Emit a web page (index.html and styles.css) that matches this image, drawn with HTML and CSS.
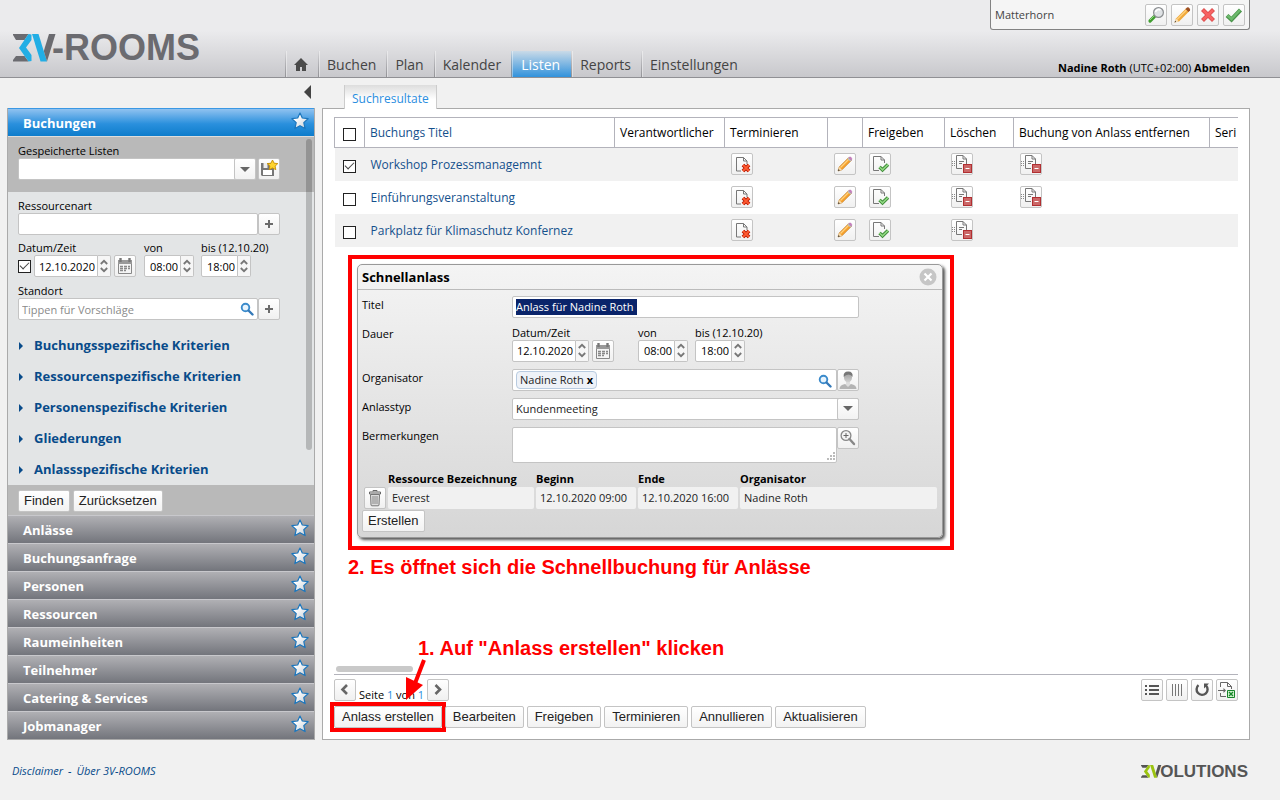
FILE: index.html
```html
<!DOCTYPE html>
<html lang="de">
<head>
<meta charset="utf-8">
<meta name="viewport" content="width=device-width, initial-scale=1">
<title>3V-ROOMS – Listen</title>
<link rel="stylesheet" href="styles.css">
</head>
<body>
<svg class="sprite" aria-hidden="true">
  <defs>
    <linearGradient id="g-star" x1="0" y1="0" x2="1" y2="1"><stop offset=".3" stop-color="#fff"/><stop offset="1" stop-color="#c4ccd4"/></linearGradient>
    <linearGradient id="g-person" x1="0" y1="0" x2="0" y2="1"><stop offset="0" stop-color="#999"/><stop offset="1" stop-color="#d4d4d4"/></linearGradient>
  </defs>
  <symbol id="i-star" viewBox="0 0 18 18"><path d="M9 1l2.300 5 5.800.7-4.300 3.900 1.300 6L9 13.700l-5.100 2.900 1.300-6L.9 6.700 6.700 6z" fill="url(#g-star)" stroke="#1b76bd" stroke-width="1.200" stroke-linejoin="round"/></symbol>
  <symbol id="i-home" viewBox="0 0 14 14"><path d="M7 0L0 7h2v6h4V9h2v4h4V7h2z" fill="#4a4a4a"/></symbol>
  <symbol id="i-search-green" viewBox="0 0 20 20"><path d="M8.500 11.500L4 16" stroke="#3f9d2f" stroke-width="3.200" stroke-linecap="round"/><path d="M8 11l-4 4" stroke="#8ed67c" stroke-width="1"/><circle cx="12.500" cy="7.500" r="4.900" fill="#dfe2e5" stroke="#8a8d90" stroke-width="1.200"/><path d="M9.500 7a3.200 3.200 0 0 1 5-2" stroke="#fff" stroke-width="1.600" fill="none"/></symbol>
  <symbol id="i-pencil-red" viewBox="0 0 20 20"><path d="M2.500 17.500l1.500-4 10-10 3 3-10 10z" fill="#f0a93c"/><path d="M5 14.500l9.500-9.500" stroke="#ffd07c" stroke-width="1.200"/><path d="M13.500 4l1.500-1.500q1.500-.5 2.500.7t.5 2.300l-1.500 1.500z" fill="#9c4f24"/><path d="M2.500 17.500l1.500-4 3 3z" fill="#f7dfb8"/><path d="M2.500 17.500l.7-1.700 1 1z" fill="#333"/></symbol>
  <symbol id="i-pencil" viewBox="0 0 20 20"><path d="M3 17l1.200-4L13.500 3.700l2.800 2.800L7 15.800z" fill="#f6a02c" stroke="#b8741c" stroke-width=".6"/><path d="M5.500 13.500L14 5" stroke="#ffd27d" stroke-width="1.200"/><path d="M12.500 4.700l1.300-1.200 2.700 2.700-1.200 1.300z" fill="#b8bcc0"/><path d="M13.800 3.500q1.400-1 2.400 0t.3 2.700z" fill="#cf7cc4" stroke="#a561a0" stroke-width=".5"/><path d="M3 17l1.200-4L7 15.800z" fill="#f7dcae"/><path d="M3 17l.6-1.900 1.300 1.300z" fill="#333"/></symbol>
  <symbol id="i-cross" viewBox="0 0 20 20"><path d="M4.500 4.500l11 11M15.500 4.500l-11 11" stroke="#d84848" stroke-width="4.200"/><path d="M5 5l10 10M15 5L5 15" stroke="#f76262" stroke-width="2.800"/></symbol>
  <symbol id="i-check" viewBox="0 0 20 20"><path d="M3 10.500l4.500 4 9-9.500" fill="none" stroke="#4a934a" stroke-width="4.200"/><path d="M3.500 10.500l4 3.500 8.500-9" fill="none" stroke="#6dba6d" stroke-width="2.400"/></symbol>
  <symbol id="i-doc-x" viewBox="0 0 20 20"><path d="M9 17H4.500V3.500h7l3.500 3.500V10M11.500 3.500V7H15" fill="none" stroke="#777"/><path d="M11 11l6 6M17 11l-6 6" stroke="#b51600" stroke-width="3.800"/><path d="M11 11l6 6M17 11l-6 6" stroke="#ff5a30" stroke-width="1.800"/></symbol>
  <symbol id="i-doc-check" viewBox="0 0 20 20"><path d="M9 16.500H3.500v-14h7.500l3.500 3.500v3M11 2.500V6h3.500" fill="none" stroke="#777"/><path d="M9.500 13l3 2.800 5.500-5.300" fill="none" stroke="#3c8b35" stroke-width="3.400"/><path d="M9.500 13l3 2.800 5.500-5.300" fill="none" stroke="#92d884" stroke-width="1.600"/></symbol>
  <symbol id="i-doc-minus" viewBox="0 0 20 20"><path d="M10 14.500H4.500v-13H11l3.500 3.500v5M11 1.500V5h3.500M7 7.500h5M7 9.500h3" fill="none" stroke="#777"/><path d="M0 7.500h3M0 9.500h3M0 11.500h3" stroke="#888" stroke-dasharray="1 1"/><rect x="11.500" y="10.500" width="8" height="8" fill="#cb6767" stroke="#b12f32"/><path d="M13.500 14.500h4" stroke="#fff"/></symbol>
  <symbol id="i-disk" viewBox="0 0 20 20"><path d="M2 4h10v5h3v8H3l-1-1z" fill="#777"/><path d="M4.500 4h4v5h-4z" fill="#eee"/><path d="M4 11h9v5H4z" fill="#fff"/><path d="M13.500 1l1.600 3.200 3.700.4-2.700 2.500.7 3.600-3.300-1.800-3.300 1.800.7-3.600-2.700-2.500 3.700-.4z" fill="#ffd42e" stroke="#c78d00" stroke-width=".9"/></symbol>
  <symbol id="i-plus" viewBox="0 0 20 20"><path d="M10 6v8M6 10h8" stroke="#6b6b6b" stroke-width="2"/></symbol>
  <symbol id="i-calendar" viewBox="0 0 20 20"><path d="M3.500 4.500h13v13h-13z" fill="#f4f4f4" stroke="#888"/><path d="M3 4h14v4H3z" fill="#999"/><path d="M5.500 2v4M14.500 2v4" stroke="#777" stroke-width="2.400"/><path d="M5 10.500h10M5 12.500h10M5 14.500h6" stroke="#888" stroke-width="1.400" stroke-dasharray="3 1"/></symbol>
  <symbol id="i-search-blue" viewBox="0 0 14 14"><circle cx="5.500" cy="5.500" r="3.800" fill="#e8f4fd" stroke="#3a8acb" stroke-width="1.900"/><path d="M8.500 8.500l4 4" stroke="#3479b8" stroke-width="2.400" stroke-linecap="round"/></symbol>
  <symbol id="i-person" viewBox="0 0 20 20"><path d="M1.500 19q0-4 5.500-5l3 2 3-2q5.500 1 5.500 5z" fill="#b4b4b4"/><path d="M8 11h4v4l-2 2-2-2z" fill="#ddd"/><ellipse cx="10" cy="7.500" rx="4" ry="5" fill="url(#g-person)"/><path d="M5.700 7q-.7-5.500 4.500-5.500T14.500 7q-1.200-2.500-4-2.500T5.700 7z" fill="#777"/></symbol>
  <symbol id="i-zoom" viewBox="0 0 20 20"><circle cx="8" cy="7.500" r="4.900" fill="#f4f4f4" stroke="#888" stroke-width="1.300"/><path d="M8 5v5M5.500 7.500h5" stroke="#666"/><path d="M11.500 11l4.500 5" stroke="#888" stroke-width="2.400" stroke-linecap="round"/></symbol>
  <symbol id="i-trash" viewBox="0 0 20 20"><path d="M8 3.500V2.500h4v1" fill="none" stroke="#666"/><path d="M4.500 4h11v2h-11z" fill="#eee" stroke="#666"/><path d="M5.500 6.500l.5 10.500q0 .8 1 .8h6q1 0 1-.8l.5-10.500z" fill="#ddd" stroke="#777"/><path d="M8 8v8M10 8v8M12 8v8" stroke="#888"/></symbol>
  <symbol id="i-close" viewBox="0 0 18 18"><circle cx="9" cy="9" r="8.500" fill="#c6c6c6"/><path d="M5.500 5.500l7 7M12.500 5.500l-7 7" stroke="#fff" stroke-width="2.200"/></symbol>
  <symbol id="i-prev" viewBox="0 0 20 20"><path d="M12 5l-4.500 4.500L12 14" fill="none" stroke="#666" stroke-width="2.600"/></symbol>
  <symbol id="i-next" viewBox="0 0 20 20"><path d="M7.500 5L12 9.500 7.500 14" fill="none" stroke="#666" stroke-width="2.600"/></symbol>
  <symbol id="i-list" viewBox="0 0 20 20"><path d="M7 6h10M7 10h10M7 14h10M3 6h2M3 10h2M3 14h2" stroke="#555" stroke-width="2"/></symbol>
  <symbol id="i-columns" viewBox="0 0 20 20"><path d="M5.500 4v12M8.500 4v12M11.500 4v12M14.500 4v12" stroke="#777"/></symbol>
  <symbol id="i-reload" viewBox="0 0 20 20"><path d="M6.500 5.200a5.500 5.500 0 1 0 7.500.3" fill="none" stroke="#555" stroke-width="2.400"/><path d="M12 3.500h5l-5 5z" fill="#555"/></symbol>
  <symbol id="i-export" viewBox="0 0 20 20"><path d="M3.500 7V2.500h7l4 4V9M10.500 2.500v4h4M3.500 13v3.500H9" fill="none" stroke="#666"/><path d="M1 10.500h7" stroke="#666"/><path d="M6.500 8l2.500 2.500L6.500 13z" fill="#666"/><path d="M10.500 10.500h7v7h-7z" fill="#d4f3d0" stroke="#17852b"/><path d="M12 12l4 4M16 12l-4 4" stroke="#17852b" stroke-width="1.300"/></symbol>
  <symbol id="i-up" viewBox="0 0 8 6"><path d="M.8 5L4 1.800 7.200 5" fill="none" stroke="#777" stroke-width="1.800"/></symbol>
  <symbol id="i-down" viewBox="0 0 8 6"><path d="M.8 1L4 4.200 7.200 1" fill="none" stroke="#777" stroke-width="1.800"/></symbol>
  <symbol id="i-mark" viewBox="0 0 44 28" preserveAspectRatio="none"><path class="mark-base" d="M0 0h15.500l-4 6H3L0 1zM3 22h8.500l4 5.500H0V26z"/><path class="mark-accent" d="M15.500 0l3 .5V6l-5.500 7.500L18.500 21v6l-3 .5L6 14z"/><path class="mark-accent" d="M19 0h6.500L34 27.500h-6.500z"/><path class="mark-base" d="M36 0h6.500L34 27.500 30.800 17z"/></symbol>
</svg>

<header class="header">
  <h1 class="logo" aria-label="3V-ROOMS"><svg class="logo-mark" aria-hidden="true"><use href="#i-mark"/></svg>-ROOMS</h1>
  <nav class="nav" aria-label="Hauptnavigation">
    <a href="#" aria-label="Startseite"><svg class="ic-home"><use href="#i-home"/></svg></a>
    <a href="#">Buchen</a>
    <a href="#">Plan</a>
    <a href="#">Kalender</a>
    <a href="#" class="active" aria-current="page">Listen</a>
    <a href="#">Reports</a>
    <a href="#">Einstellungen</a>
  </nav>
  <div class="header-right">
    <div class="quick">
      <span class="quick-name">Matterhorn</span>
      <button class="icon-btn" aria-label="Suchen"><svg><use href="#i-search-green"/></svg></button>
      <button class="icon-btn" aria-label="Bearbeiten"><svg><use href="#i-pencil-red"/></svg></button>
      <button class="icon-btn" aria-label="Verwerfen"><svg><use href="#i-cross"/></svg></button>
      <button class="icon-btn" aria-label="Bestätigen"><svg><use href="#i-check"/></svg></button>
    </div>
    <div class="user"><b>Nadine Roth</b> (UTC+02:00) <a href="#">Abmelden</a></div>
  </div>
</header>

<main class="main">
  <aside class="side">
    <div class="side-top"><button class="collapse" aria-label="Seitenleiste einklappen"></button></div>
    <div class="side-box">
      <h2 class="acc acc-active"><a href="#">Buchungen</a><svg class="ic-star"><use href="#i-star"/></svg></h2>
      <div class="side-scroll">
        <div class="saved">
          <label for="saved">Gespeicherte Listen</label>
          <div class="row">
            <span class="select saved-select"><select id="saved" class="field"><option></option></select><span class="drop"></span></span>
            <button class="icon-btn save-btn" aria-label="Liste speichern"><svg><use href="#i-disk"/></svg></button>
          </div>
        </div>
        <div class="criteria">
          <div>
            <label for="art">Ressourcenart</label>
            <div class="row side-field"><input id="art" class="field" type="text"><button class="icon-btn" aria-label="Ressourcenart hinzufügen"><svg><use href="#i-plus"/></svg></button></div>
          </div>
          <div class="times">
            <div>
              <label for="s-date">Datum/Zeit</label>
              <div class="row">
                <input class="check" type="checkbox" checked aria-label="Datum verwenden">
                <span class="spin date"><input id="s-date" class="field" type="text" value="12.10.2020"><span class="steps"><button aria-label="Später"><svg><use href="#i-up"/></svg></button><button aria-label="Früher"><svg><use href="#i-down"/></svg></button></span></span>
                <button class="icon-btn cal" aria-label="Kalender"><svg><use href="#i-calendar"/></svg></button>
              </div>
            </div>
            <div>
              <label for="s-from">von</label>
              <span class="spin"><input id="s-from" class="field" type="text" value="08:00"><span class="steps"><button aria-label="Später"><svg><use href="#i-up"/></svg></button><button aria-label="Früher"><svg><use href="#i-down"/></svg></button></span></span>
            </div>
            <div>
              <label for="s-to">bis (12.10.20)</label>
              <span class="spin"><input id="s-to" class="field" type="text" value="18:00"><span class="steps"><button aria-label="Später"><svg><use href="#i-up"/></svg></button><button aria-label="Früher"><svg><use href="#i-down"/></svg></button></span></span>
            </div>
          </div>
          <div>
            <label for="ort">Standort</label>
            <div class="row side-field"><span class="search"><input id="ort" class="field" type="text" placeholder="Tippen für Vorschläge"><svg><use href="#i-search-blue"/></svg></span><button class="icon-btn" aria-label="Standort hinzufügen"><svg><use href="#i-plus"/></svg></button></div>
          </div>
        </div>
        <ul class="groups">
          <li><a href="#">Buchungsspezifische Kriterien</a></li>
          <li><a href="#">Ressourcenspezifische Kriterien</a></li>
          <li><a href="#">Personenspezifische Kriterien</a></li>
          <li><a href="#">Gliederungen</a></li>
          <li><a href="#">Anlassspezifische Kriterien</a></li>
        </ul>
        <span class="thumb-v"></span>
      </div>
      <div class="side-actions"><button class="btn">Finden</button><button class="btn">Zurücksetzen</button></div>
      <h2 class="acc"><a href="#">Anlässe</a><svg class="ic-star"><use href="#i-star"/></svg></h2>
      <h2 class="acc"><a href="#">Buchungsanfrage</a><svg class="ic-star"><use href="#i-star"/></svg></h2>
      <h2 class="acc"><a href="#">Personen</a><svg class="ic-star"><use href="#i-star"/></svg></h2>
      <h2 class="acc"><a href="#">Ressourcen</a><svg class="ic-star"><use href="#i-star"/></svg></h2>
      <h2 class="acc"><a href="#">Raumeinheiten</a><svg class="ic-star"><use href="#i-star"/></svg></h2>
      <h2 class="acc"><a href="#">Teilnehmer</a><svg class="ic-star"><use href="#i-star"/></svg></h2>
      <h2 class="acc"><a href="#">Catering &amp; Services</a><svg class="ic-star"><use href="#i-star"/></svg></h2>
      <h2 class="acc"><a href="#">Jobmanager</a><svg class="ic-star"><use href="#i-star"/></svg></h2>
    </div>
  </aside>

  <section class="content">
    <div class="tabs"><a href="#" class="tab">Suchresultate</a></div>
    <div class="panel">
      <div class="table-wrap">
        <table class="results">
          <colgroup><col class="c-check"><col class="c-title"><col class="c-owner"><col class="c-term"><col class="c-edit"><col class="c-free"><col class="c-del"><col class="c-remove"><col></colgroup>
          <thead>
            <tr><th><input class="check" type="checkbox" aria-label="Alle auswählen"></th><th><a href="#">Buchungs Titel</a></th><th>Verantwortlicher</th><th>Terminieren</th><th></th><th>Freigeben</th><th>Löschen</th><th>Buchung von Anlass entfernen</th><th>Seri</th></tr>
          </thead>
          <tbody>
            <tr>
              <td><input class="check" type="checkbox" checked aria-label="Workshop Prozessmanagemnt auswählen"></td><td><a href="#">Workshop Prozessmanagemnt</a></td><td></td>
              <td><button class="icon-btn" aria-label="Terminieren"><svg><use href="#i-doc-x"/></svg></button></td>
              <td><button class="icon-btn" aria-label="Bearbeiten"><svg><use href="#i-pencil"/></svg></button></td>
              <td><button class="icon-btn" aria-label="Freigeben"><svg><use href="#i-doc-check"/></svg></button></td>
              <td><button class="icon-btn" aria-label="Löschen"><svg><use href="#i-doc-minus"/></svg></button></td>
              <td><button class="icon-btn" aria-label="Von Anlass entfernen"><svg><use href="#i-doc-minus"/></svg></button></td><td></td>
            </tr>
            <tr>
              <td><input class="check" type="checkbox" aria-label="Einführungsveranstaltung auswählen"></td><td><a href="#">Einführungsveranstaltung</a></td><td></td>
              <td><button class="icon-btn" aria-label="Terminieren"><svg><use href="#i-doc-x"/></svg></button></td>
              <td><button class="icon-btn" aria-label="Bearbeiten"><svg><use href="#i-pencil"/></svg></button></td>
              <td><button class="icon-btn" aria-label="Freigeben"><svg><use href="#i-doc-check"/></svg></button></td>
              <td><button class="icon-btn" aria-label="Löschen"><svg><use href="#i-doc-minus"/></svg></button></td>
              <td><button class="icon-btn" aria-label="Von Anlass entfernen"><svg><use href="#i-doc-minus"/></svg></button></td><td></td>
            </tr>
            <tr>
              <td><input class="check" type="checkbox" aria-label="Parkplatz für Klimaschutz Konfernez auswählen"></td><td><a href="#">Parkplatz für Klimaschutz Konfernez</a></td><td></td>
              <td><button class="icon-btn" aria-label="Terminieren"><svg><use href="#i-doc-x"/></svg></button></td>
              <td><button class="icon-btn" aria-label="Bearbeiten"><svg><use href="#i-pencil"/></svg></button></td>
              <td><button class="icon-btn" aria-label="Freigeben"><svg><use href="#i-doc-check"/></svg></button></td>
              <td><button class="icon-btn" aria-label="Löschen"><svg><use href="#i-doc-minus"/></svg></button></td>
              <td></td><td></td>
            </tr>
          </tbody>
        </table>
      </div>

      <div class="callout">
        <form class="dialog" aria-label="Schnellanlass">
          <div class="dialog-head"><h2>Schnellanlass</h2><button type="button" class="close" aria-label="Schliessen"><svg><use href="#i-close"/></svg></button></div>
          <div class="form">
            <label for="titel">Titel</label>
            <div class="title-field field"><input id="titel" type="text" value="Anlass für Nadine Roth"></div>
            <span>Dauer</span>
            <div class="times">
              <div>
                <label for="d-date">Datum/Zeit</label>
                <div class="row">
                  <span class="spin date"><input id="d-date" class="field" type="text" value="12.10.2020"><span class="steps"><button type="button" aria-label="Später"><svg><use href="#i-up"/></svg></button><button type="button" aria-label="Früher"><svg><use href="#i-down"/></svg></button></span></span>
                  <button type="button" class="icon-btn cal" aria-label="Kalender"><svg><use href="#i-calendar"/></svg></button>
                </div>
              </div>
              <div class="from">
                <label for="d-from">von</label>
                <span class="spin"><input id="d-from" class="field" type="text" value="08:00"><span class="steps"><button type="button" aria-label="Später"><svg><use href="#i-up"/></svg></button><button type="button" aria-label="Früher"><svg><use href="#i-down"/></svg></button></span></span>
              </div>
              <div>
                <label for="d-to">bis (12.10.20)</label>
                <span class="spin"><input id="d-to" class="field" type="text" value="18:00"><span class="steps"><button type="button" aria-label="Später"><svg><use href="#i-up"/></svg></button><button type="button" aria-label="Früher"><svg><use href="#i-down"/></svg></button></span></span>
              </div>
            </div>
            <label for="org">Organisator</label>
            <div class="row"><span class="search field tags"><span class="tag">Nadine Roth<button type="button" aria-label="Nadine Roth entfernen">x</button></span><input id="org" type="text"><svg><use href="#i-search-blue"/></svg></span><button type="button" class="icon-btn" aria-label="Person wählen"><svg><use href="#i-person"/></svg></button></div>
            <label for="typ">Anlasstyp</label>
            <span class="select"><select id="typ" class="field"><option>Kundenmeeting</option></select><span class="drop"></span></span>
            <label for="bem">Bermerkungen</label>
            <div class="row note-row"><span class="note"><textarea id="bem" class="field"></textarea><svg class="grip" viewBox="0 0 8 8"><path d="M6 1h2M3 4h2M6 4h2M0 7h2M3 7h2M6 7h2" stroke="#bbb" stroke-width="2"/></svg></span><button type="button" class="icon-btn" aria-label="Vergrössern"><svg><use href="#i-zoom"/></svg></button></div>
          </div>
          <table class="res">
            <thead><tr><th></th><th class="r-name">Ressource Bezeichnung</th><th class="r-time">Beginn</th><th class="r-time">Ende</th><th>Organisator</th></tr></thead>
            <tbody><tr><td class="r-icon"><button type="button" class="icon-btn" aria-label="Ressource löschen"><svg><use href="#i-trash"/></svg></button></td><td>Everest</td><td>12.10.2020 09:00</td><td>12.10.2020 16:00</td><td>Nadine Roth</td></tr></tbody>
          </table>
          <button type="button" class="btn">Erstellen</button>
        </form>
      </div>
      <p class="hint">2. Es öffnet sich die Schnellbuchung für Anlässe</p>

      <div class="bottom">
        <p class="hint hint-one">1. Auf "Anlass erstellen" klicken</p>
        <div class="thumb-h"></div>
        <div class="pager">
          <button class="icon-btn" aria-label="Vorherige Seite"><svg><use href="#i-prev"/></svg></button>
          <span class="pages">Seite <a href="#">1</a> von <a href="#">1</a></span>
          <button class="icon-btn" aria-label="Nächste Seite"><svg><use href="#i-next"/></svg></button>
          <div class="tools">
            <button class="icon-btn" aria-label="Liste"><svg><use href="#i-list"/></svg></button>
            <button class="icon-btn" aria-label="Spalten"><svg><use href="#i-columns"/></svg></button>
            <button class="icon-btn" aria-label="Neu laden"><svg><use href="#i-reload"/></svg></button>
            <button class="icon-btn" aria-label="Exportieren"><svg><use href="#i-export"/></svg></button>
          </div>
        </div>
        <div class="actions">
          <span class="marked"><button class="btn">Anlass erstellen</button></span>
          <button class="btn">Bearbeiten</button><button class="btn">Freigeben</button><button class="btn">Terminieren</button><button class="btn">Annullieren</button><button class="btn">Aktualisieren</button>
        </div>
        <svg class="arrow" viewBox="0 0 24 42" aria-hidden="true"><path d="M21 1l-10 26" stroke="#f00" stroke-width="4"/><path d="M3 41V18l17 8z" fill="#f00"/></svg>
      </div>
    </div>
  </section>
</main>

<footer class="footer">
  <div class="links"><a href="#">Disclaimer</a><span>-</span><a href="#">Über 3V-ROOMS</a></div>
  <div class="brand" aria-label="3VOLUTIONS"><svg class="brand-mark" aria-hidden="true"><use href="#i-mark"/></svg>OLUTIONS</div>
</footer>
</body>
</html>
```

FILE: styles.css
```css
* { box-sizing: border-box; }

body {
  margin: 0;
  min-height: 100vh;
  display: flex;
  flex-direction: column;
  background: #f1f1f1;
  color: #000;
  font: 11px/15px "Open Sans", "Noto Sans", sans-serif;
}

a { color: inherit; text-decoration: none; }
h1, h2, p, ul { margin: 0; padding: 0; }
ul { list-style: none; }
button { font: inherit; padding: 0; cursor: pointer; }
svg { display: block; }
label { display: block; }
.sprite { position: absolute; width: 0; height: 0; }
.row { display: flex; align-items: center; }

/* Header */
.header {
  display: flex;
  height: 78px;
  padding-right: 30px;
  border-bottom: 1px solid #909094;
  background: linear-gradient(#ebebed 40%, #c8c8cc);
}
.logo {
  --mark-base: #6b6b70;
  --mark-accent: #22aee5;
  display: flex;
  align-items: flex-start;
  width: 285px;
  padding: 30px 0 0 13px;
  color: #6b6b70;
  font: bold 36px/36px "Liberation Sans", Arial, sans-serif;
}
.logo-mark {
  width: 44px;
  height: 28px;
  margin: 4px -5px 0 0;
}
.mark-base { fill: var(--mark-base); }
.mark-accent { fill: var(--mark-accent); }
.nav { display: flex; align-items: flex-end; }
.nav a {
  display: flex;
  align-items: center;
  height: 26px;
  padding: 0 10px 0 8px;
  border-left: 1px solid;
  border-image: linear-gradient(transparent, #919195) 1;
  box-shadow: inset 1px 0 #ffffff66;
  color: #444;
  font-size: 14px;
}
.nav .active { padding: 0 11px 0 9px; background: linear-gradient(#c9dae8, #3192dc); color: #fff; }
.ic-home { width: 14px; height: 14px; }
.nav a:first-child { padding: 2px 10px 0 8px; }
.header-right {
  display: flex;
  flex-direction: column;
  justify-content: space-between;
  align-items: flex-end;
  margin-left: auto;
}
.quick {
  display: flex;
  align-items: center;
  gap: 4px;
  width: 260px;
  height: 30px;
  padding: 0 4px;
  border: 1px solid #838383;
  border-top: 0;
  border-radius: 0 0 3px 3px;
  background: #f5f5f5;
  color: #444;
}
.quick-name { flex: 1; }
.user { padding-bottom: 2px; }
.user a { font-weight: bold; }

/* Controls */
.icon-btn {
  display: grid;
  place-items: center;
  flex: none;
  width: 22px;
  height: 22px;
  border: 1px solid #c4c4c4;
  border-radius: 2px;
  background: linear-gradient(#fff, #f0f0f0);
}
.icon-btn svg { width: 20px; height: 20px; }
.btn {
  height: 22px;
  padding: 0 5px;
  border: 1px solid #c4c4c4;
  border-radius: 2px;
  background: linear-gradient(#fff, #f2f2f2);
  color: #222;
  font: 13px/20px "Liberation Sans", Arial, sans-serif;
}
.field {
  width: 100%;
  min-width: 0;
  height: 22px;
  margin: 0;
  padding: 0 3px;
  border: 1px solid #c4c4c4;
  border-radius: 2px;
  background: #fff;
  color: #222;
  font: 11px/20px "Open Sans", "Noto Sans", sans-serif;
}
.field::placeholder { color: #8a8a8a; }
.check {
  appearance: none;
  display: grid;
  place-items: center;
  flex: none;
  width: 13px;
  height: 13px;
  margin: 0;
  border: 1px solid #222;
  background: #fff;
}
.check:checked::after {
  content: "";
  width: 8px;
  height: 4px;
  margin-top: -3px;
  border: solid #444;
  border-width: 0 0 1px 1px;
  transform: rotate(-45deg);
}
.select, .search, .note { position: relative; display: block; flex: 1; }
.select select { appearance: none; padding-right: 22px; }
.drop {
  position: absolute;
  top: 0;
  right: 0;
  display: grid;
  place-items: center;
  width: 22px;
  height: 22px;
  border: 1px solid #c4c4c4;
  border-radius: 2px;
  background: linear-gradient(#fff, #f2f2f2);
  pointer-events: none;
}
.drop::after {
  content: "";
  border: 5px solid transparent;
  border-top-color: #666;
  border-bottom: 0;
}
.search > svg {
  position: absolute;
  top: 4px;
  right: 4px;
  width: 14px;
  height: 14px;
}
.spin { display: flex; width: 50px; }
.spin.date { width: 77px; }
.spin .field { padding: 0 2px; border-radius: 2px 0 0 2px; color: #000; text-align: right; }
.steps {
  display: flex;
  flex: none;
  flex-direction: column;
  justify-content: space-evenly;
  width: 13px;
  border: 1px solid #c4c4c4;
  border-left: 0;
  border-radius: 0 2px 2px 0;
  background: #f6f6f6;
}
.steps button { border: 0; background: none; }
.steps svg { width: 8px; height: 6px; margin: auto; }
.times { display: flex; }
.cal { margin: 0 8px 0 3px; }
.times > div + div { width: 57px; white-space: nowrap; }

/* Sidebar */
.main { display: flex; flex: 1; padding: 0 30px 0 7px; }
.side {
  display: flex;
  flex: none;
  flex-direction: column;
  width: 308px;
  margin-right: 7px;
}
.side-top { display: flex; justify-content: flex-end; height: 30px; padding: 7px 4px 0; }
.collapse {
  width: 7px;
  height: 14px;
  border: solid transparent;
  border-width: 7px 7px 7px 0;
  border-right-color: #444;
  background: none;
}
.side-box {
  display: flex;
  flex: 1;
  flex-direction: column;
  border: 1px solid #aaa;
  border-top: 0;
}
.acc {
  display: flex;
  align-items: center;
  justify-content: space-between;
  height: 28px;
  padding: 2px 5px 0 15px;
  border-top: 1px solid #c8c8cc;
  background: linear-gradient(#b0b0b4, #73757c);
  color: #fff;
  font-size: 13px;
}
.acc-active {
  height: 29px;
  border-top-color: #3a98e4;
  border-bottom: 1px solid #ddd;
  background: linear-gradient(#90c2f0, #2a90dd 55%, #0d7ccb);
}
.ic-star { width: 18px; height: 18px; margin-bottom: 6px; }
.side-scroll { position: relative; flex: 1; background: #e3e5e6; }
.saved { padding: 6px 10px 12px; background: #b9b9b9; }
.saved-select { flex: none; width: 238px; }
.save-btn { margin-left: 2px; }
.criteria { display: grid; gap: 6px; padding: 6px 10px 10px; }
.side-field { width: 262px; }
.criteria .check { margin-right: 3px; }
.criteria .times label { line-height: 14px; }
.groups a {
  display: flex;
  align-items: center;
  height: 31px;
  padding-left: 11px;
  color: #084b8a;
  font-weight: bold;
  font-size: 13px;
}
.groups a::before {
  content: "";
  margin-right: 11px;
  border: 4px solid transparent;
  border-right: 0;
  border-left-color: #084b8a;
}
.thumb-v {
  position: absolute;
  top: 2px;
  right: 2px;
  width: 6px;
  height: 311px;
  border-radius: 3px;
  background: #00000033;
}
.side-actions { display: flex; gap: 3px; padding: 5px 10px 3px; background: #b9b9b9; }

/* Result panel */
.content { display: flex; flex: 1; flex-direction: column; min-width: 0; }
.tabs { display: flex; height: 30px; padding: 7px 22px 0; }
.tab {
  height: 24px;
  padding: 6px 7px 0;
  border: solid #ccc;
  border-width: 0 1px;
  background: linear-gradient(#ddd, #fff 60%);
  color: #2a8ee0;
  font-size: 12px;
  z-index: 1;
}
.panel {
  display: flex;
  flex: 1;
  flex-direction: column;
  padding: 8px 11px 11px;
  border: 1px solid #aaa;
  background: #fff;
}
.table-wrap { overflow: hidden; }
.results { width: 1000px; table-layout: fixed; border-collapse: collapse; font-size: 12px; }
.c-check { width: 30px; }
.c-title { width: 250px; }
.c-owner { width: 110px; }
.c-term { width: 103px; }
.c-edit { width: 35px; }
.c-free { width: 82px; }
.c-del { width: 69px; }
.c-remove { width: 196px; }
.results th {
  height: 30px;
  padding: 0 5px;
  border: 1px solid #b3b3bb;
  font-weight: normal;
  text-align: left;
  white-space: nowrap;
}
.results td { height: 33px; padding: 0 6px; }
.results .check { margin: 4px 0 0 3px; }
.results td .check { margin-left: 2px; }
.results tbody tr:nth-child(odd) { background: #f1f1f1; }
.results a { color: #14508c; }

/* Quick event dialog */
.callout {
  width: 606px;
  max-width: 100%;
  margin: 8px 0 0 14px;
  padding: 5px;
  border: 4px solid #f00;
}
.dialog {
  margin-right: 2px;
  margin-bottom: 3px;
  padding: 0 4px 5px;
  border: 1px solid #999;
  border-radius: 5px;
  background: linear-gradient(#f4f4f4, #d6d6d6);
  box-shadow: 2px 2px 3px #555;
}
.dialog-head {
  display: flex;
  align-items: center;
  justify-content: space-between;
  height: 25px;
  margin: 0 -4px 6px;
  padding: 1px 5px 0 4px;
  border-bottom: 1px solid #bbb;
}
.dialog-head h2 { font-size: 13px; }
.close { border: 0; background: none; }
.close svg { width: 18px; height: 18px; }
.form {
  display: grid;
  grid-template-columns: 150px 347px;
  row-gap: 7px;
  margin-bottom: 8px;
}
.form > label, .form > span:not(.select) { padding-top: 1px; }
.title-field { display: flex; align-items: center; }
.title-field input {
  width: 121px;
  height: 16px;
  padding: 0;
  border: 0;
  background: #0a246a;
  color: #fff;
  font: inherit;
}
.times .from { margin-left: 16px; }
.tags { display: flex; align-items: center; }
.tags input { flex: 1; min-width: 0; height: 16px; border: 0; }
.tag {
  display: flex;
  align-items: center;
  gap: 3px;
  height: 18px;
  padding: 0 3px;
  border: 1px solid #b8cbe0;
  border-radius: 4px;
  background: #eef2f8;
}
.tag button { border: 0; background: none; font: bold 11px/12px "Open Sans", sans-serif; }
.note-row { align-items: flex-start; }
.note textarea { display: block; height: 36px; resize: none; }
.grip { position: absolute; right: 2px; bottom: 3px; width: 8px; height: 8px; }
.res { width: 577px; margin-bottom: 1px; border-spacing: 2px 0; }
.res th { height: 16px; padding: 0; text-align: left; }
.res td { height: 22px; padding: 0 4px; border-radius: 2px; background: #f1f1f1; color: #222; }
.res .r-icon { width: 21px; padding: 0; background: none; }
.r-name { width: 146px; }
.r-time { width: 100px; }

/* Annotations and bottom bar */
.hint { margin-left: 14px; padding-top: 6px; color: #f00; font: bold 20px/23px "Liberation Sans", Arial, sans-serif; }
.bottom { position: relative; margin-top: auto; }
.hint-one { margin: 0 0 6px 84px; padding: 0; }
.thumb-h { width: 77px; height: 6px; margin: 0 0 2px 2px; border-radius: 3px; background: #c9c9c9; }
.pager { display: flex; gap: 3px; padding: 4px 0; border-top: 1px solid #b3b3bb; }
.pages { padding-top: 8px; }
.pages a { color: #2a8ee0; }
.tools { display: flex; gap: 3px; margin-left: auto; }
.actions { display: flex; gap: 3px; }
.actions .btn { display: block; padding: 0 7px; }
.marked { margin: -4px; border: 4px solid #f00; }
.arrow { position: absolute; left: 69px; bottom: 27px; width: 24px; height: 42px; }

/* Footer */
.footer {
  display: flex;
  align-items: center;
  justify-content: space-between;
  height: 60px;
  padding: 0 32px 0 12px;
}
.links { display: flex; gap: 5px; color: #084b8a; font-style: italic; }
.brand {
  --mark-base: #555;
  --mark-accent: #9bc410;
  display: flex;
  align-items: center;
  padding-top: 3px;
  color: #555;
  font: bold 17px/20px "Liberation Sans", Arial, sans-serif;
}
.brand-mark { width: 21px; height: 13px; margin-right: -2px; }
```
